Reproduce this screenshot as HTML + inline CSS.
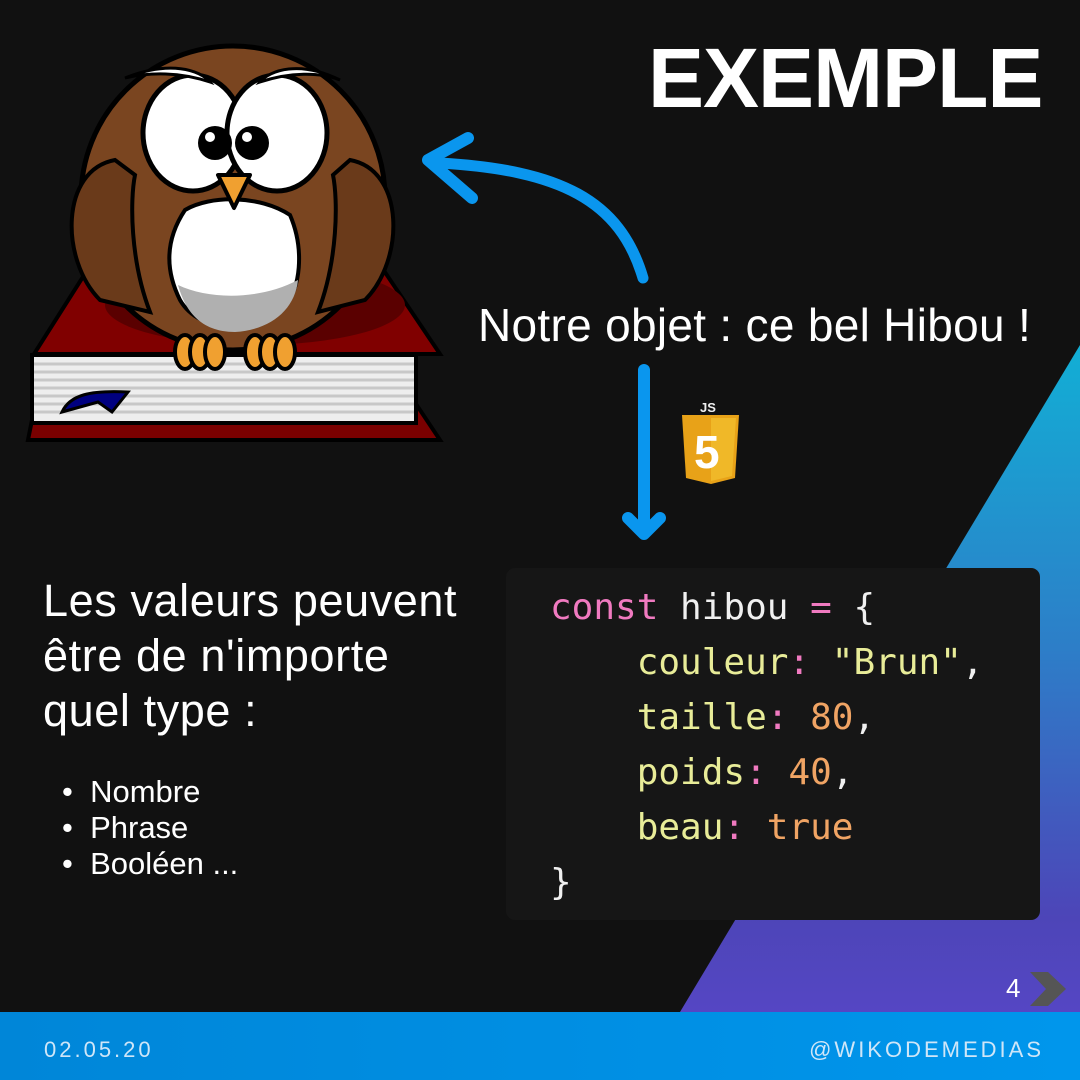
<!DOCTYPE html>
<html><head><meta charset="utf-8"><style>
*{margin:0;padding:0;box-sizing:border-box}
body{width:1080px;height:1080px;background:#111;position:relative;overflow:hidden;font-family:"Liberation Sans",sans-serif;color:#fff}
.abs{position:absolute}
#tri{left:0;top:0;width:1080px;height:1080px;background:linear-gradient(180deg,#10b2d6 30%,#2d7ec8 60%,#4d45b8 85%,#5b47cc 100%);clip-path:polygon(1080px 345px,1080px 1012px,680px 1012px)}
#bar{left:0;top:1012px;width:1080px;height:68px;background:linear-gradient(90deg,#0086d8,#0096ec)}
.foot{font-size:22px;letter-spacing:3px;color:#cfe6f8;top:1037px}
#code{left:506px;top:568px;width:534px;height:352px;background:#161616;border-radius:9px}
pre{font-family:"DejaVu Sans Mono","Liberation Mono",monospace;font-size:36px;line-height:55px;position:absolute;left:550px;top:580px;color:#f0f0f0}
.k{color:#f07ac0}.p{color:#e8ec98}.n{color:#f0a464}.c{color:#f07ac0}
</style></head><body>
<div id="tri" class="abs"></div>
<div id="bar" class="abs"></div>
<div class="abs foot" style="left:44px">02.05.20</div>
<div class="abs foot" style="right:36px">@WIKODEMEDIAS</div>
<div class="abs" style="left:1006px;top:973px;font-size:26px">4</div>
<svg class="abs" style="left:1028px;top:970px" width="40" height="38"><polygon points="2,2 20,2 38,19 20,36 2,36 18,19" fill="#555"/></svg>

<div class="abs" style="left:648px;top:30px;font-size:84px;font-weight:bold;letter-spacing:-1px">EXEMPLE</div>
<div class="abs" style="left:478px;top:298px;font-size:46px;letter-spacing:0.3px">Notre objet : ce bel Hibou !</div>

<svg class="abs" style="left:0;top:0" width="1080" height="1080">
<path d="M643 278 C620 200 560 170 440 163" stroke="#0a96ee" stroke-width="11" fill="none" stroke-linecap="round"/>
<path d="M468 138 L428 160 L472 198" stroke="#0a96ee" stroke-width="12" fill="none" stroke-linecap="round" stroke-linejoin="round"/>
<line x1="644" y1="370" x2="644" y2="520" stroke="#0a96ee" stroke-width="12" stroke-linecap="round"/>
<path d="M628 518 L644 534 L660 518" stroke="#0a96ee" stroke-width="12" fill="none" stroke-linecap="round" stroke-linejoin="round"/>
<text x="700" y="412" font-size="13" font-weight="bold" fill="#eee" font-family="Liberation Sans">JS</text>
<path d="M682 415 L739 415 L735 478 L711 484 L686 478 Z" fill="#e8a218"/>
<path d="M711 418 L736 418 L732 476 L711 481 Z" fill="#f0b828"/>
<text x="694" y="468" font-size="46" font-weight="bold" fill="#fff" font-family="Liberation Sans">5</text>
<!-- book -->
<path d="M28 440 L440 440 L400 380 L40 380 Z" fill="#7a0000" stroke="#000" stroke-width="4"/>
<path d="M34 354 L440 354 L370 250 L100 250 Z" fill="#800000" stroke="#000" stroke-width="4"/>
<rect x="32" y="355" width="384" height="68" fill="#eee" stroke="#000" stroke-width="4"/>
<g stroke="#c8c8c8" stroke-width="3">
<line x1="34" y1="364" x2="414" y2="364"/><line x1="34" y1="372" x2="414" y2="372"/><line x1="34" y1="380" x2="414" y2="380"/><line x1="34" y1="388" x2="414" y2="388"/><line x1="34" y1="396" x2="414" y2="396"/><line x1="34" y1="404" x2="414" y2="404"/><line x1="34" y1="412" x2="414" y2="412"/></g>
<path d="M62 412 C70 395 90 390 128 392 L112 412 L98 402 Z" fill="#000080" stroke="#000" stroke-width="3"/>
<ellipse cx="255" cy="305" rx="150" ry="40" fill="#5a0000"/>
<!-- owl -->
<circle cx="233" cy="198" r="152" fill="#7a4520" stroke="#000" stroke-width="5"/>
<path d="M115 160 C60 170 60 260 100 300 L150 312 C130 260 130 200 135 175 Z" fill="#6a3a1a" stroke="#000" stroke-width="4"/>
<path d="M350 160 C405 170 405 260 365 300 L318 312 C338 260 338 200 333 175 Z" fill="#6a3a1a" stroke="#000" stroke-width="4"/>
<ellipse cx="193" cy="133" rx="50" ry="58" fill="#fff" stroke="#000" stroke-width="5"/>
<ellipse cx="277" cy="133" rx="50" ry="58" fill="#fff" stroke="#000" stroke-width="5"/>
<circle cx="215" cy="143" r="17" fill="#000"/><circle cx="252" cy="143" r="17" fill="#000"/>
<circle cx="210" cy="137" r="5" fill="#fff"/><circle cx="247" cy="137" r="5" fill="#fff"/>
<path d="M125 78 C170 60 200 70 210 82 C180 72 150 72 125 78 Z M340 80 C300 60 270 70 260 82 C290 72 320 72 340 80Z" fill="#fff" stroke="#000" stroke-width="3"/>
<path d="M185 210 C210 195 260 195 290 215 C305 250 300 290 285 305 C260 335 200 335 180 300 C165 270 165 240 185 210Z" fill="#fff" stroke="#000" stroke-width="4"/>
<path d="M178 285 C210 300 260 300 298 280 C295 310 270 330 235 332 C200 332 185 310 178 285Z" fill="#b0b0b0"/>
<path d="M218 175 L250 175 L234 208 Z" fill="#f0a030" stroke="#000" stroke-width="4" stroke-linejoin="round"/>
<g fill="#f0a030" stroke="#000" stroke-width="4">
<ellipse cx="185" cy="352" rx="10" ry="17"/><ellipse cx="200" cy="352" rx="10" ry="17"/><ellipse cx="215" cy="352" rx="10" ry="17"/>
<ellipse cx="255" cy="352" rx="10" ry="17"/><ellipse cx="270" cy="352" rx="10" ry="17"/><ellipse cx="285" cy="352" rx="10" ry="17"/></g>
</svg>

<div class="abs" style="left:43px;top:573px;font-size:45px;line-height:55px;letter-spacing:0.6px">Les valeurs peuvent<br>être de n'importe<br>quel type :</div>
<div class="abs" style="left:62px;top:774px;font-size:31px;line-height:36px">
<div>•&nbsp; Nombre</div><div>•&nbsp; Phrase</div><div>•&nbsp; Booléen ...</div></div>

<div id="code" class="abs"></div>
<pre><span class="k">const</span> hibou <span class="k">=</span> {
    <span class="p">couleur</span><span class="c">:</span> <span class="p">"Brun"</span>,
    <span class="p">taille</span><span class="c">:</span> <span class="n">80</span>,
    <span class="p">poids</span><span class="c">:</span> <span class="n">40</span>,
    <span class="p">beau</span><span class="c">:</span> <span class="n">true</span>
}</pre>
</body></html>
